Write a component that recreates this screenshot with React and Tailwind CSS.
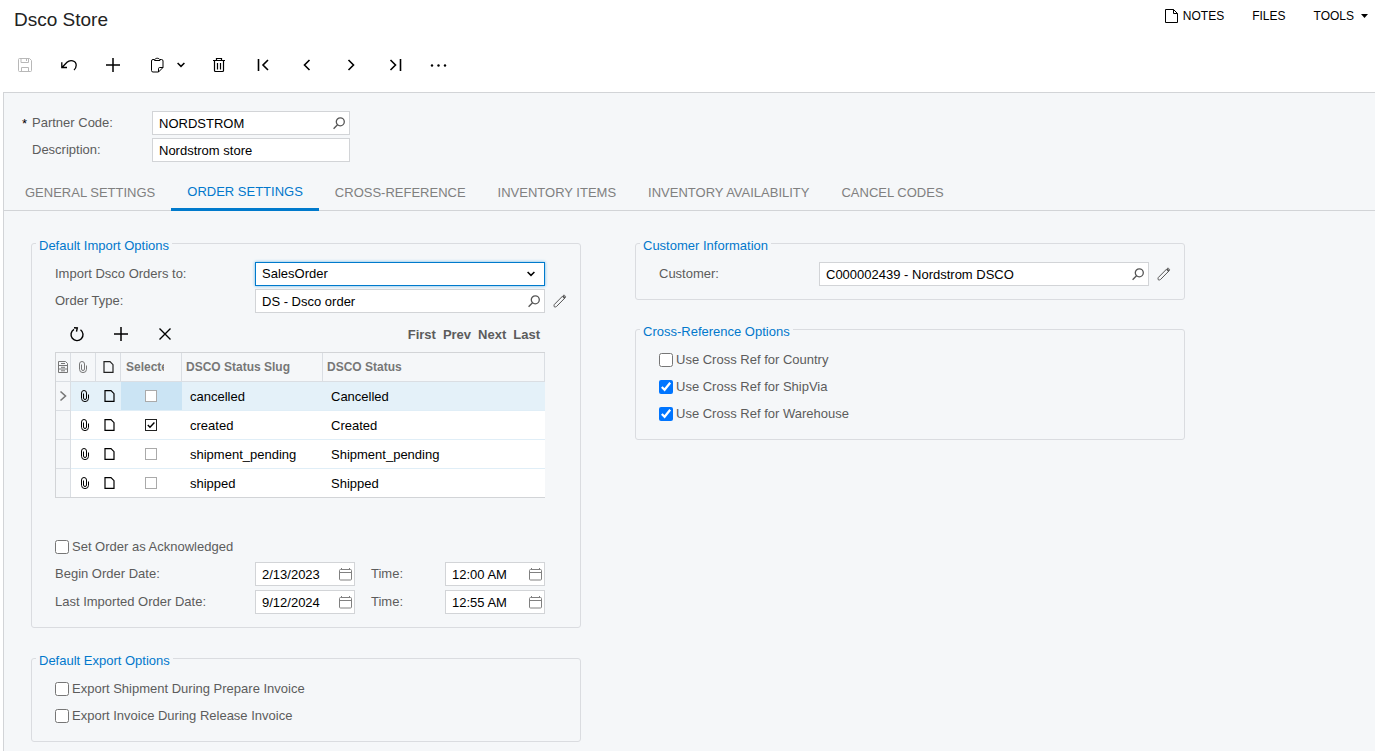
import React from "react";

const svg = { fill: "none", stroke: "currentColor", "aria-hidden": true };

const SaveIcon = () => (
  <svg {...svg} width="16" height="16" viewBox="0 0 16 16">
    <path d="M1.500 2.500a1 1 0 0 1 1-1h10l2 2v10a1 1 0 0 1-1 1h-11a1 1 0 0 1-1-1zM4 1.500v4h7.500v-4M9.500 2v2M4.500 14.500v-4h7v4" />
  </svg>
);
const UndoIcon = () => (
  <svg {...svg} width="18" height="16" viewBox="0 0 18 16" strokeWidth="1.300">
    <path d="M1.800 5.300v5.200h5.200M2.200 10.200L7 5.300C10 2.300 16.200 3.200 16.200 8.300c0 2-.8 3.500-2.200 4.700" />
  </svg>
);
const PlusIcon = () => (
  <svg {...svg} width="16" height="16" viewBox="0 0 16 16" strokeWidth="1.500">
    <path d="M8 1v14M1 8h14" />
  </svg>
);
const ClipboardIcon = () => (
  <svg {...svg} width="14" height="16" viewBox="0 0 14 16">
    <path d="M4.500 2.500H3a1.500 1.500 0 0 0-1.500 1.500v9.500a1.500 1.500 0 0 0 1.500 1.500h5.500l4.500-4.500V4a1.500 1.500 0 0 0-1.500-1.500H10M8.500 15v-3.300a1.200 1.200 0 0 1 1.200-1.200h3.300M4.500 3.500c0-3 5.500-3 5.500 0z" />
  </svg>
);
const ChevronDown = () => (
  <svg {...svg} width="8" height="6" viewBox="0 0 8 6" strokeWidth="1.500">
    <path d="M.6 1L4 4.400 7.400 1" />
  </svg>
);
const TrashIcon = () => (
  <svg {...svg} width="14" height="16" viewBox="0 0 14 16" strokeWidth="1.200">
    <path d="M1 3.500h12M4.500 3.500v-2h5v2M2.500 3.500v10a1 1 0 0 0 1 1h7a1 1 0 0 0 1-1v-10M5.500 6v6.500M8.500 6v6.500" />
  </svg>
);
const FirstIcon = () => (
  <svg {...svg} width="14" height="14" viewBox="0 0 14 14" strokeWidth="1.600">
    <path d="M2.500 1v12M12 2L7 7l5 5" />
  </svg>
);
const PrevIcon = () => (
  <svg {...svg} width="14" height="14" viewBox="0 0 14 14" strokeWidth="1.600">
    <path d="M9.500 2l-5 5 5 5" />
  </svg>
);
const NextIcon = () => (
  <svg {...svg} width="14" height="14" viewBox="0 0 14 14" strokeWidth="1.600">
    <path d="M4.500 2l5 5-5 5" />
  </svg>
);
const LastIcon = () => (
  <svg {...svg} width="14" height="14" viewBox="0 0 14 14" strokeWidth="1.600">
    <path d="M12.500 1v12M2.500 2l5 5-5 5" />
  </svg>
);
const DotsIcon = () => (
  <svg width="18" height="4" viewBox="0 0 18 4" fill="currentColor" aria-hidden="true">
    <circle cx="2" cy="2.500" r="1.200" />
    <circle cx="8.500" cy="2.500" r="1.200" />
    <circle cx="15" cy="2.500" r="1.200" />
  </svg>
);
const NoteIcon = () => (
  <svg {...svg} width="14" height="14" viewBox="0 0 14 14">
    <path d="M.5.500h8l4 4v9H.500zM8.500.500v4h4" />
  </svg>
);
const SearchIcon = () => (
  <svg {...svg} width="12" height="13" viewBox="0 0 12 13" strokeWidth="1.300">
    <circle cx="7.300" cy="4.800" r="4" />
    <path d="M4.500 7.700L.6 11.800" />
  </svg>
);
const PencilIcon = () => (
  <svg {...svg} width="14" height="14" viewBox="0 0 14 14">
    <path d="M1.300 10.500L10 1.700c.6-.6 1.300-.6 1.900-.1l.3.300c.5.600.5 1.300-.1 1.900L3.500 12.500c-.8.600-1.700.6-2.200.3-.4-.6-.4-1.600 0-2.300z" />
    <path d="M9.900 2.100l1.900 1.900" strokeWidth="1.800" />
  </svg>
);
const CalendarIcon = () => (
  <svg {...svg} width="13" height="14" viewBox="0 0 13 14">
    <rect x=".5" y="2.500" width="12" height="10.500" rx="1" />
    <path d="M.5 5.500h12M2.500 1v1.500M10.500 1v1.500" />
  </svg>
);
const RefreshIcon = () => (
  <svg {...svg} width="16" height="16" viewBox="0 0 16 16" strokeWidth="1.400">
    <path d="M11.500 3.700a6 6 0 1 1-6.500-.3M5 1.700l3.300.3-.8 3.700" />
  </svg>
);
const CloseIcon = () => (
  <svg {...svg} width="14" height="14" viewBox="0 0 14 14" strokeWidth="1.400">
    <path d="M1.500 1.500l11 11M12.500 1.500l-11 11" />
  </svg>
);
const ClipIcon = () => (
  <svg {...svg} width="8" height="12" viewBox="0 0 8 12">
    <path d="M.5 3v5.300a3.400 3.200 0 0 0 7 0V4.500M.5 3a2.500 2.500 0 0 1 5 0v5a1.500 1.500 0 0 1-3 0V3.500" />
  </svg>
);
const SheetIcon = () => (
  <svg {...svg} width="11" height="12" viewBox="0 0 11 12" strokeWidth="1.200">
    <path d="M1 .7h6l3 3v7.600H1z" />
  </svg>
);
const GridConfigIcon = () => (
  <svg {...svg} width="10" height="12" viewBox="0 0 10 12">
    <path d="M.5.500h7l2 2v9h-9zM.5 4.500h9M.5 8h9M3 2.500h4M3 6.300h4M3 9.800h4" />
  </svg>
);

function Panel({ title, children }) {
  return (
    <fieldset className="min-w-0 rounded-[3px] border border-[#dadce0] pt-2 pb-[13px] pl-[23px]">
      <legend className="-ml-[19px] px-[3px] pt-1 leading-[17px] text-[#0278cc]">{title}</legend>
      {children}
    </fieldset>
  );
}

const boxClass = "flex h-6 min-w-0 items-center border border-[#d2d4d7] bg-white";
const inputClass = "h-full w-full min-w-0 bg-transparent pl-1.5 text-black outline-none";

function IconField({ id, value, icon, action, className, pad }) {
  return (
    <div className={`${boxClass} ${className}`}>
      <input id={id} type="text" defaultValue={value} className={inputClass} />
      {icon && (
        <button type="button" aria-label={action} className={`shrink-0 ${pad}`}>
          {icon}
        </button>
      )}
    </div>
  );
}

function Check({ label, checked }) {
  return (
    <label className="flex h-6 items-center gap-[3px]">
      <input type="checkbox" defaultChecked={checked} className="size-[14px] shrink-0 accent-[#0075ff]" />
      <span className="pb-0.5">{label}</span>
    </label>
  );
}

function EditSlot({ label }) {
  return (
    <div className="flex w-[35px] shrink-0 items-center pl-2 text-[#555]">
      {label && (
        <button type="button" aria-label={label}>
          <PencilIcon />
        </button>
      )}
    </div>
  );
}

function DateRow({ id, label, date, time }) {
  return (
    <div className="flex items-center pr-[35px]">
      <label htmlFor={id} className="w-[200px] shrink-0 pb-0.5">{label}</label>
      <IconField id={id} value={date} icon={<CalendarIcon />} action="Pick date" className="w-[100px] text-[#808080]" pad="pr-0.5" />
      <label htmlFor={`${id}-time`} className="flex-1 pb-0.5 pl-4">Time:</label>
      <IconField id={`${id}-time`} value={time} icon={<CalendarIcon />} action="Pick time" className="w-[100px] text-[#808080]" pad="pr-0.5" />
    </div>
  );
}

const statuses = [
  { slug: "cancelled", status: "Cancelled", on: false, active: true },
  { slug: "created", status: "Created", on: true },
  { slug: "shipment_pending", status: "Shipment_pending", on: false },
  { slug: "shipped", status: "Shipped", on: false },
];

function StatusTable() {
  const th = "h-[29px] border-r border-b border-[#dadee3] p-0 font-bold";
  return (
    <table className="w-full table-fixed border-separate border-spacing-0 border-t border-b border-l border-[#d2d4d7] text-left">
      <colgroup>
        <col className="w-[15px]" />
        <col className="w-[25px]" />
        <col className="w-[25px]" />
        <col className="w-[61px]" />
        <col className="w-[141px]" />
        <col />
      </colgroup>
      <thead className="text-xs text-[#777]">
        <tr>
          <th className={th} aria-label="Configure columns"><span className="flex justify-center"><GridConfigIcon /></span></th>
          <th className={th} aria-label="Files"><span className="flex justify-center"><ClipIcon /></span></th>
          <th className={`${th} text-[#222]`} aria-label="Notes"><span className="flex justify-center"><SheetIcon /></span></th>
          <th className={`${th} pl-[5px]`}><span className="block w-[38px] overflow-hidden">Selected</span></th>
          <th className={`${th} pl-1`}>DSCO Status Slug</th>
          <th className={`${th} pl-1`}>DSCO Status</th>
        </tr>
      </thead>
      <tbody className="text-black">
        {statuses.map((row, i) => {
          const last = i === statuses.length - 1;
          const size = last ? "h-7" : "h-[29px] border-b";
          const cell = `${size} border-[#e0eef7] p-0 ${row.active ? "bg-[#e4f1f9]" : "bg-white"}`;
          return (
            <tr key={row.slug}>
              <td className={`${size} border-r border-[#dadee3] p-0 text-[#777]`}>
                {row.active && (
                  <svg {...svg} className="mx-auto" width="8" height="12" viewBox="0 0 8 12" strokeWidth="1.600">
                    <path d="M1.500 1.500L6.500 6l-5 4.500" />
                  </svg>
                )}
              </td>
              <td className={cell}><button type="button" aria-label="Files" className="flex w-full justify-center pl-0.5"><ClipIcon /></button></td>
              <td className={cell}><button type="button" aria-label="Notes" className="flex w-full justify-center pl-0.5"><SheetIcon /></button></td>
              <td className={`${size} border-[#e0eef7] p-0 pr-px ${row.active ? "bg-[#cbe4f4]" : "bg-white"}`}>
                <span className="relative mx-auto block size-3">
                  <input
                    type="checkbox"
                    aria-label={`Select ${row.slug}`}
                    defaultChecked={row.on}
                    className="peer block size-3 appearance-none border border-[#aaa] bg-white checked:border-[#222]"
                  />
                  <svg {...svg} className="pointer-events-none absolute inset-0 hidden peer-checked:block" width="12" height="12" viewBox="0 0 12 12" strokeWidth="1.400">
                    <path d="M2.800 6l2.200 2.300L9.400 3.500" />
                  </svg>
                </span>
              </td>
              <td className={`${cell} pl-2`}>{row.slug}</td>
              <td className={`${cell} pl-2`}>{row.status}</td>
            </tr>
          );
        })}
      </tbody>
    </table>
  );
}

const tabs = ["GENERAL SETTINGS", "ORDER SETTINGS", "CROSS-REFERENCE", "INVENTORY ITEMS", "INVENTORY AVAILABILITY", "CANCEL CODES"];

function ToolButton({ label, children, className = "w-11 justify-center", disabled }) {
  return (
    <button type="button" aria-label={label} disabled={disabled} className={`flex h-11 shrink-0 items-center disabled:text-[#b8b8b8] ${className}`}>
      {children}
    </button>
  );
}

export default function App() {
  return (
    <div className="flex min-h-screen flex-col bg-white font-['Liberation_Sans',Arial,sans-serif] text-[13px] leading-[17px] text-[#5c5c5c]">
      <header className="text-black">
        <div className="flex items-start justify-between pt-2 pr-[7px] pl-[14px]">
          <h1 className="text-[19px] leading-6 text-[#222]">Dsco Store</h1>
          <nav className="flex gap-7 text-xs leading-4">
            <button type="button" className="flex items-center gap-1"><NoteIcon /> NOTES</button>
            <button type="button">FILES</button>
            <button type="button" className="flex items-center gap-[7px]">
              TOOLS
              <svg width="7" height="4" viewBox="0 0 7 4" fill="currentColor" aria-hidden="true"><path d="M0 0h7L3.500 4z" /></svg>
            </button>
          </nav>
        </div>
        <div className="mt-[11px] mb-[5px] ml-[3px] flex">
          <ToolButton label="Save" disabled><SaveIcon /></ToolButton>
          <ToolButton label="Undo"><UndoIcon /></ToolButton>
          <ToolButton label="Add"><PlusIcon /></ToolButton>
          <ToolButton label="Copy" className="w-9 justify-end pr-[7px]"><ClipboardIcon /></ToolButton>
          <ToolButton label="Copy options" className="w-[26px] pl-1.5"><ChevronDown /></ToolButton>
          <ToolButton label="Delete"><TrashIcon /></ToolButton>
          <ToolButton label="First record"><FirstIcon /></ToolButton>
          <ToolButton label="Previous record"><PrevIcon /></ToolButton>
          <ToolButton label="Next record"><NextIcon /></ToolButton>
          <ToolButton label="Last record"><LastIcon /></ToolButton>
          <ToolButton label="More"><DotsIcon /></ToolButton>
        </div>
      </header>

      <main className="ml-[3px] flex-1 border-t border-l border-[#d2d4d7] bg-[#f5f7f9] pt-[18px]">
        <div className="flex flex-col gap-[3px] pl-[18px]">
          <div className="flex items-center">
            <span className="w-2.5 text-black">*</span>
            <label htmlFor="partner" className="w-[120px] pb-0.5">Partner Code:</label>
            <IconField id="partner" value="NORDSTROM" icon={<SearchIcon />} action="Look up partner" className="w-[198px] text-[#555]" pad="pr-1" />
          </div>
          <div className="flex items-center pl-2.5">
            <label htmlFor="description" className="w-[120px] pb-0.5">Description:</label>
            <IconField id="description" value="Nordstrom store" className="w-[198px]" />
          </div>
        </div>

        <div role="tablist" className="mt-[11px] flex h-[38px] border-b border-[#d2d4d7] pl-[5px]">
          {tabs.map((tab, i) => (
            <button
              key={tab}
              type="button"
              role="tab"
              aria-selected={i === 1}
              className={`px-4 pt-0.5 whitespace-nowrap ${i === 1 ? "-mb-px border-b-3 border-[#007acc] text-[#0278cc]" : "text-[#808080]"}`}
            >
              {tab}
            </button>
          ))}
        </div>

        <div className="flex items-start gap-[54px] pt-[22px] pr-7 pl-[27px]">
          <div className="flex max-w-[550px] min-w-0 flex-1 flex-col gap-5">
            <Panel title="Default Import Options">
              <div className="flex flex-col gap-[3px]">
                <div className="flex items-center">
                  <label htmlFor="target" className="w-[200px] shrink-0 pb-0.5">Import Dsco Orders to:</label>
                  <div className="relative min-w-0 flex-1">
                    <select id="target" className="block h-6 w-full appearance-none border border-[#007acc] bg-white pb-0.5 pl-1.5 text-black shadow-[0_0_3px_#66b5e8] outline-none">
                      <option>SalesOrder</option>
                    </select>
                    <span className="pointer-events-none absolute inset-y-0 right-2.5 flex items-center text-black"><ChevronDown /></span>
                  </div>
                  <EditSlot />
                </div>
                <div className="flex items-center">
                  <label htmlFor="order-type" className="w-[200px] shrink-0 pb-0.5">Order Type:</label>
                  <IconField id="order-type" value="DS - Dsco order" icon={<SearchIcon />} action="Look up order type" className="flex-1 text-[#555]" pad="pr-1" />
                  <EditSlot label="Edit order type" />
                </div>
              </div>
              <div className="pr-[35px]">
                <div className="mt-[3px] flex h-9 items-center text-black">
                  <ToolButton label="Refresh"><RefreshIcon /></ToolButton>
                  <ToolButton label="Add row"><PlusIcon /></ToolButton>
                  <ToolButton label="Delete row"><CloseIcon /></ToolButton>
                  <div className="ml-auto flex gap-[7px] pr-[5px] font-bold text-[#5c5c5c]">
                    <button type="button">First</button>
                    <button type="button">Prev</button>
                    <button type="button">Next</button>
                    <button type="button">Last</button>
                  </div>
                </div>
                <StatusTable />
              </div>
              <div className="mt-[37px] flex flex-col gap-[3px]">
                <Check label="Set Order as Acknowledged" />
                <div className="flex flex-col gap-1">
                  <DateRow id="begin" label="Begin Order Date:" date="2/13/2023" time="12:00 AM" />
                  <DateRow id="last" label="Last Imported Order Date:" date="9/12/2024" time="12:55 AM" />
                </div>
              </div>
            </Panel>
            <Panel title="Default Export Options">
              <div className="flex flex-col gap-[3px]">
                <Check label="Export Shipment During Prepare Invoice" />
                <Check label="Export Invoice During Release Invoice" />
              </div>
            </Panel>
          </div>

          <div className="flex max-w-[550px] min-w-0 flex-1 flex-col gap-[19px]">
            <Panel title="Customer Information">
              <div className="flex items-center">
                <label htmlFor="customer" className="w-40 shrink-0 pb-0.5">Customer:</label>
                <IconField id="customer" value="C000002439 - Nordstrom DSCO" icon={<SearchIcon />} action="Look up customer" className="flex-1 text-[#555]" pad="pr-1" />
                <EditSlot label="Edit customer" />
              </div>
            </Panel>
            <Panel title="Cross-Reference Options">
              <div className="flex flex-col gap-[3px]">
                <Check label="Use Cross Ref for Country" />
                <Check label="Use Cross Ref for ShipVia" checked />
                <Check label="Use Cross Ref for Warehouse" checked />
              </div>
            </Panel>
          </div>
        </div>
      </main>
    </div>
  );
}
